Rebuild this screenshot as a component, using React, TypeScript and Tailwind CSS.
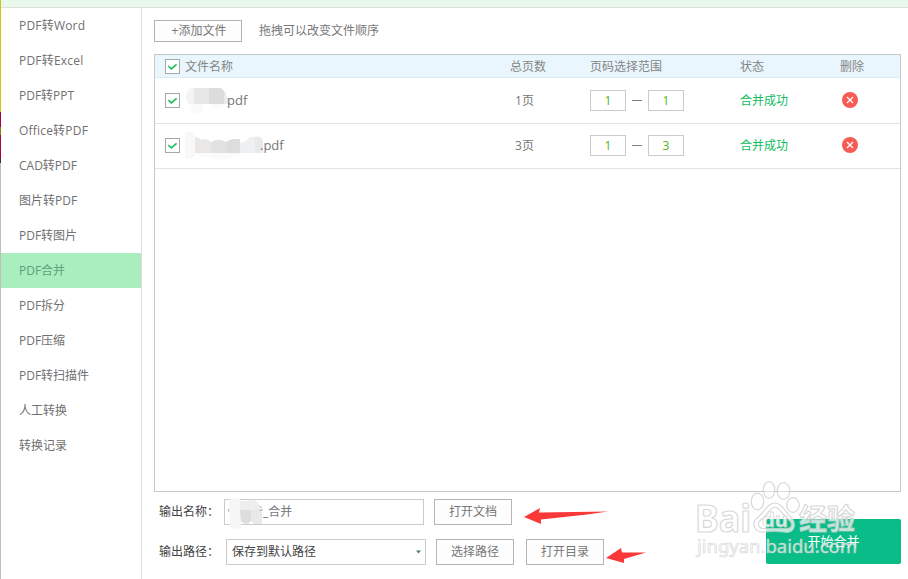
import { useState } from "react"

interface FileItem {
  id: number
  pages: number
  from: string
  to: string
  checked: boolean
}

const MENU = [
  "PDF转Word",
  "PDF转Excel",
  "PDF转PPT",
  "Office转PDF",
  "CAD转PDF",
  "图片转PDF",
  "PDF转图片",
  "PDF合并",
  "PDF拆分",
  "PDF压缩",
  "PDF转扫描件",
  "人工转换",
  "转换记录",
]

const FILES: FileItem[] = [
  { id: 1, pages: 1, from: "1", to: "1", checked: true },
  { id: 2, pages: 3, from: "1", to: "3", checked: true },
]

const GRID = "grid grid-cols-[30px_325px_80px_150px_100px_1fr] items-center"

function Checkbox({ checked, onClick }: { checked: boolean; onClick?: () => void }) {
  return (
    <button onClick={onClick} className="ml-[10px] flex size-[15px] items-center justify-center border border-[#a8a8a8] bg-white">
      {checked && (
        <svg width="13" height="13" viewBox="0 0 13 13" fill="none" stroke="#1fbf5f" strokeWidth="1.7">
          <path d="M2.4 6.2 L5.4 8.8 L10.6 4.4" />
        </svg>
      )}
    </button>
  )
}

// Mosaic that hides the name of the first file
function MaskA() {
  return (
    <svg width="43" height="30" viewBox="0 0 43 30" className="shrink-0">
      <path d="M6 17 h12 l-1 8 q-4 5 -7 2 q-5 0 -4 -10z M24 17 h16 q-2 5 -8 5 q-4 0 -8 -5z" fill="#fafafa" />
      <path d="M9 2 H5 Q1 5 1 10 Q1 15 4 18 H9z" fill="#f4f4f4" />
      <path d="M9 2 h15 v16 h-15z" fill="#e7e7e7" />
      <path d="M24 2 h12 q4 3 5 8 l1 8 h-18z" fill="#dcdcdc" />
      <path d="M39 8 l4 4 v6 h-4z" fill="#ececec" />
    </svg>
  )
}

function MaskB() {
  return (
    <svg width="79" height="30" viewBox="0 0 79 30" className="shrink-0">
      <path d="M0 2 q5 -3 10 1 v22 q-5 5 -10 2z" fill="#f8f8f8" />
      <path d="M10 21 h45 q-2 5 -8 4 q-5 5 -15 3 q-5 1 -9 -3 q-8 2 -13 -4z" fill="#fbfbfa" />
      <path d="M10 6 q4 0 6 3 q6 -3 10 2 v11 h-16z" fill="#e9e8e7" />
      <path d="M26 12 q5 -6 15 -1 v11 h-15z" fill="#e1e2e4" />
      <path d="M41 11 q4 -3 8 -3 h6 v14 h-14z" fill="#dedddd" />
      <path d="M55 12 q4 0 7 -3 q3 -4 8 -3 v16 h-15z" fill="#eff0f2" />
      <path d="M70 6 q6 -2 8 4 v12 h-8z" fill="#e7e9eb" />
    </svg>
  )
}

function PageBox({ value }: { value: string }) {
  return (
    <input
      readOnly
      value={value}
      className="h-[21px] w-9 border border-[#cbcbcb] bg-white text-center text-xs text-[#55b01c] outline-none"
    />
  )
}

function OutlineButton({ label, className = "" }: { label: string; className?: string }) {
  return <button className={`h-[26px] w-[78px] border border-[#b5b5b5] bg-[#fdfdfd] text-[#777] ${className}`}>{label}</button>
}

function Watermark() {
  return (
    <svg
      className="pointer-events-none absolute left-[690px] top-[476px]"
      width="180"
      height="90"
      viewBox="0 0 180 90"
      stroke="#c9cccb"
      strokeWidth="1.2"
      strokeLinejoin="round"
      fill="#ffffff"
      fillOpacity="0.72"
      strokeOpacity="0.75"
    >
      <text
        x="5"
        y="55.5"
        fontSize="37"
        fontWeight="bold"
        textLength="56"
        lengthAdjust="spacingAndGlyphs"
        className="font-['Noto_Sans',sans-serif]"
      >
        Bai
      </text>
      <g fillOpacity="0.35">
        <ellipse cx="67.5" cy="25.5" rx="6.3" ry="8.3" />
        <ellipse cx="79" cy="14" rx="5.8" ry="8.3" />
        <ellipse cx="93.5" cy="15" rx="6.3" ry="8.3" />
        <ellipse cx="103" cy="29" rx="6.2" ry="7.3" />
      </g>
      <path
        fillRule="evenodd"
        d="M85 27 C77 27 75 36 68 41 C60 47 65 57 74 56 C81 55 87 55 94 56 C105 58 107 48 101 41 C95 36 92 27 85 27Z M85 31 C79 32 78 39 72 43 C66 47 68 52.500 74 52.500 H96 C103 52.500 103 47 98 43 C92 39 91 32 85 31Z"
      />
      <text
        x="72"
        y="51"
        fontSize="20"
        fontWeight="bold"
        fillOpacity="0.8"
        strokeWidth="0.8"
        textLength="26"
        lengthAdjust="spacingAndGlyphs"
        className="font-['Noto_Sans',sans-serif]"
      >
        du
      </text>
      <text
        x="109"
        y="53.5"
        fontSize="29"
        fontWeight="bold"
        textLength="56"
        lengthAdjust="spacingAndGlyphs"
        className="font-['Noto_Sans_CJK_SC',sans-serif]"
      >
        经验
      </text>
      <text x="7" y="77" fontSize="18.5" strokeWidth="0.7" textLength="160" className="font-['Noto_Sans',sans-serif]">
        jingyan.baidu.com
      </text>
    </svg>
  )
}

export default function App() {
  const [active, setActive] = useState("PDF合并")
  const [files, setFiles] = useState(FILES)

  const toggle = (id: number) => {
    setFiles(files.map((f) => (f.id === id ? { ...f, checked: !f.checked } : f)))
  }

  return (
    <div className="relative flex h-[579px] w-[908px] overflow-hidden bg-white font-['Open_Sans','Noto_Sans_CJK_SC',sans-serif] text-xs text-[#777]">
      {/* Sliver of the desktop behind the window */}
      <div className="flex w-px shrink-0 flex-col">
        <div className="h-[112px] bg-[#cfc31a]" />
        <div className="h-[15px] bg-[#a8003f]" />
        <div className="h-[8px] bg-[#7c8a08]" />
        <div className="h-[24px] bg-[#b0003f]" />
        <div className="h-[4px] bg-[#123a5a]" />
        <div className="flex-1 bg-[#bdbdbd]" />
      </div>

      <div className="flex flex-1 flex-col">
        <div className="h-2 shrink-0 border-b border-[#dcdfdc] bg-[#e8f8eb]" />

        <div className="flex flex-1">
          <nav className="w-[141px] shrink-0 border-r border-[#dedede]">
            {MENU.map((item) => (
              <button
                key={item}
                onClick={() => setActive(item)}
                className={`block h-[35px] w-full pl-[18px] text-left ${
                  item === active ? "bg-[#aaeec0] text-[#5f9f7c]" : "text-[#707070]"
                } ${/Word|Excel|Office/.test(item) ? "tracking-[0.2px]" : ""}`}
              >
                {item}
              </button>
            ))}
          </nav>

          <main className="flex flex-1 flex-col pl-3 pr-[7px] pt-3">
            <div className="flex h-[22px] items-center">
              <button className="h-[22px] w-[88px] border border-[#b3b3b3] bg-[#fdfdfd] pl-[2px]">+添加文件</button>
              <span className="ml-[17px]">拖拽可以改变文件顺序</span>
            </div>

            <div className="mt-3 h-[438px] border border-[#c8c8c8]">
              <div className={`${GRID} h-[23px] border-b border-[#dcebf2] bg-[#e9f6fd] text-[#858585]`}>
                <Checkbox checked />
                <span className="pt-[2px]">文件名称</span>
                <span className="pt-[2px]">总页数</span>
                <span className="pt-[2px]">页码选择范围</span>
                <span className="pt-[2px]">状态</span>
                <span className="pt-[2px]">删除</span>
              </div>

              {files.map((file, i) => (
                <div
                  key={file.id}
                  className={`${GRID} border-b border-[#e2e2e2] ${i === 0 ? "h-[46px]" : "h-[45px] pb-px"}`}
                >
                  <Checkbox checked={file.checked} onClick={() => toggle(file.id)} />
                  <div className="flex items-center text-[13px]">
                    {i === 0 ? <MaskA /> : <MaskB />}
                    <span className={i === 0 ? "-ml-px" : "-ml-1"}>{i === 0 ? "pdf" : ".pdf"}</span>
                  </div>
                  <span className="pl-[5px]">{file.pages}页</span>
                  <div className="flex items-center">
                    <PageBox value={file.from} />
                    <div className="mx-1.5 h-px w-[10px] bg-[#808080]" />
                    <PageBox value={file.to} />
                  </div>
                  <span className="text-[#0fbd62]">合并成功</span>
                  <button className="-mt-px ml-[2px] size-4">
                    <svg width="16" height="16" viewBox="0 0 16 16">
                      <circle cx="8" cy="8" r="8" fill="#f65c54" />
                      <path d="M5 5 L11 11 M11 5 L5 11" stroke="#fff" strokeWidth="1.3" />
                    </svg>
                  </button>
                </div>
              ))}
            </div>

            <div className="mt-[7px] flex justify-between">
              <div className="flex flex-col gap-[14px] pl-[5px]">
                <div className="flex items-center">
                  <span className="w-[65px] text-[#444]">输出名称：</span>
                  <div className="relative flex h-[26px] w-[200px] items-center border border-[#cbcbcb] pl-[38px]">
                    _合并
                    <svg className="absolute -top-[2px] left-[3px]" width="35" height="32" viewBox="0 0 35 32">
                      <path d="M1 2 q6 -4 12 0 v27 q-6 4 -11 0z" fill="#f6f6f5" />
                      <path d="M12 3 h6 q5 -3 10 0 l3 3 v6 h-19z" fill="#ededed" />
                      <path d="M12 12 h11 v11 q-5 6 -10 0z" fill="#dedede" />
                      <path d="M23 12 h11 v14 h-8 l-3 -3z" fill="#e8e9e9" />
                      <path d="M31 8 l3 2 M31 12 h4 M0 14 l1 -3" stroke="#999" strokeWidth="0.8" />
                    </svg>
                  </div>
                  <OutlineButton label="打开文档" className="ml-[10px]" />
                </div>
                <div className="flex items-center">
                  <span className="w-[67px] text-[#444]">输出路径：</span>
                  <button className="flex h-[26px] w-[200px] items-center justify-between border border-[#cbcbcb] pl-[5px] pr-1 text-[#444]">
                    保存到默认路径
                    <svg width="5" height="4" viewBox="0 0 5 4">
                      <path d="M0 0.5 H5 L2.5 3.5Z" fill="#54797a" />
                    </svg>
                  </button>
                  <OutlineButton label="选择路径" className="ml-[10px]" />
                  <OutlineButton label="打开目录" className="ml-3" />
                </div>
              </div>
              <button className="mt-5 h-[45px] w-[135px] rounded-[2px] bg-[#0abc87] text-[13px] text-white">开始合并</button>
            </div>
          </main>
        </div>
      </div>

      {/* Hand-drawn pointers */}
      <svg className="pointer-events-none absolute left-[520px] top-[500px]" width="130" height="70" viewBox="0 0 130 70" fill="#fb3838">
        <path d="M4 17 L20 8 L19 12.5 L88 11.5 L67 14.5 L21 19.5 L21 24Z" />
        <path d="M86 58 L101 48 L102 52.5 L126 52.5 L104 59 L104 63Z" />
      </svg>

      <Watermark />
    </div>
  )
}
